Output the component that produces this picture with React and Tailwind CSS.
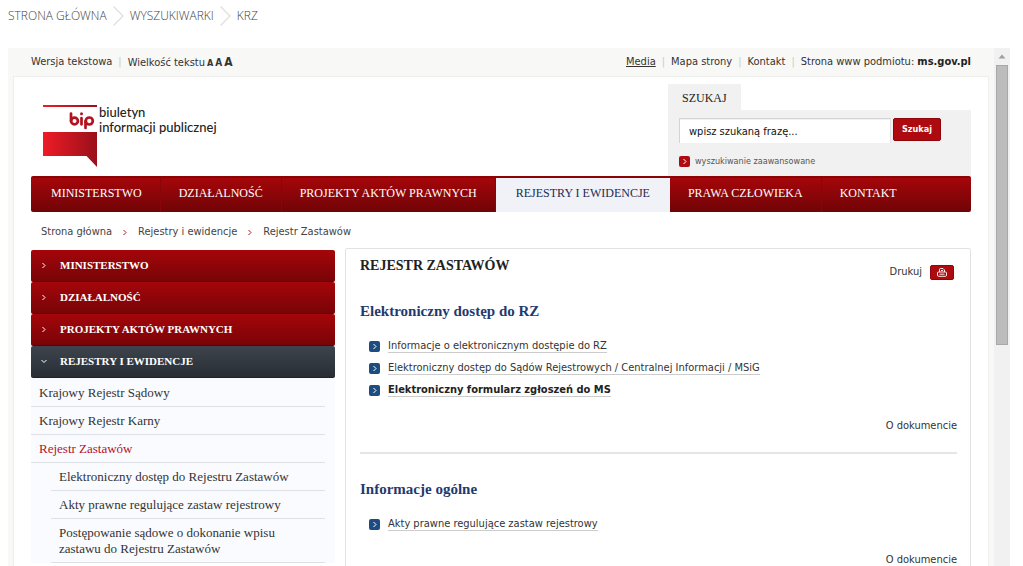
import React from "react";

const trail = ["STRONA GŁÓWNA", "WYSZUKIWARKI", "KRZ"];

const navItems = [
  { label: "MINISTERSTWO" },
  { label: "DZIAŁALNOŚĆ" },
  { label: "PROJEKTY AKTÓW PRAWNYCH" },
  { label: "REJESTRY I EWIDENCJE", active: true },
  { label: "PRAWA CZŁOWIEKA" },
  { label: "KONTAKT" },
];

const sections = [
  {
    title: "Elektroniczny dostęp do RZ",
    links: [
      { label: "Informacje o elektronicznym dostępie do RZ" },
      { label: "Elektroniczny dostęp do Sądów Rejestrowych / Centralnej Informacji / MSiG" },
      { label: "Elektroniczny formularz zgłoszeń do MS", strong: true },
    ],
  },
  {
    title: "Informacje ogólne",
    links: [{ label: "Akty prawne regulujące zastaw rejestrowy" }],
  },
];

function TrailArrow() {
  return (
    <svg width="11" height="20" viewBox="0 0 11 20" fill="none" stroke="#dedede" strokeWidth="1.2" aria-hidden="true">
      <path d="M0.5 0.5L10 10L0.5 19.5" />
    </svg>
  );
}

function Chevron({ className }) {
  return (
    <svg width="4" height="7" viewBox="0 0 4 7" className={className} fill="none" stroke="currentColor" strokeWidth="1" aria-hidden="true">
      <path d="M0.5 1L3 3.500L0.5 6" />
    </svg>
  );
}

function Bullet({ className }) {
  return (
    <span className={"flex size-[11px] shrink-0 items-center justify-center rounded-xs text-white " + className}>
      <Chevron />
    </span>
  );
}

function Logo() {
  return (
    <a href="#bip" className="flex gap-[2px] text-[#222]" aria-label="bip biuletyn informacji publicznej">
      <svg width="54" height="64" viewBox="0 0 54 64" aria-hidden="true">
        <defs>
          <linearGradient id="flag" x1="0" x2="1">
            <stop offset="0" stopColor="#ee1c25" />
            <stop offset="1" stopColor="#99101a" />
          </linearGradient>
        </defs>
        <rect width="54" height="2" y="1" fill="url(#flag)" />
        <path d="M0 28H54V63L43.500 52H0Z" fill="url(#flag)" />
        <g fill="none" stroke="#b5121f" strokeWidth="2.700" strokeLinecap="round">
          <path d="M28 9.500V17" />
          <circle cx="31.500" cy="17" r="3.400" />
          <path d="M38.500 14V20.300" />
          <path d="M42.500 17V24" />
          <circle cx="46.300" cy="17" r="3.500" />
        </g>
        <circle cx="38.500" cy="9.700" r="1.500" fill="#b5121f" />
      </svg>
      <span className="flex flex-col pt-px font-['Lato',sans-serif] text-[13px] leading-[15px] font-medium">
        <span>biuletyn</span>
        <span>informacji publicznej</span>
      </span>
    </a>
  );
}

function UtilityBar() {
  const sep = <span className="text-[#ccc]">|</span>;
  return (
    <div className="flex h-7 items-center justify-between pr-[18px] pl-[23px] text-[11px] text-[#333]">
      <div className="flex items-center gap-[6px]">
        <a href="#text">Wersja tekstowa</a>
        {sep}
        <span className="flex items-baseline gap-[2px]">
          Wielkość tekstu
          <button className="text-[9px] font-bold">A</button>
          <button className="text-[10px] font-bold">A</button>
          <button className="text-[12px] font-bold">A</button>
        </span>
      </div>
      <div className="flex items-center gap-[6px]">
        <a href="#media" className="underline">Media</a>
        {sep}
        <a href="#map">Mapa strony</a>
        {sep}
        <a href="#contact">Kontakt</a>
        {sep}
        <span>
          Strona www podmiotu: <a href="#ms" className="font-bold text-[#222]">ms.gov.pl</a>
        </span>
      </div>
    </div>
  );
}

function Search() {
  return (
    <form className="flex w-[303px] flex-col pt-[7px]" onSubmit={(e) => e.preventDefault()}>
      <label htmlFor="q" className="h-[26px] w-[73px] bg-[#f1f1f1] pl-[14px] font-['Liberation_Serif',serif] text-[12px] leading-[28px] text-[#222]">
        SZUKAJ
      </label>
      <div className="flex flex-1 flex-col bg-[#f1f1f1] px-[11px] pt-2">
        <div className="flex gap-[2px]">
          <input
            id="q"
            defaultValue="wpisz szukaną frazę..."
            className="h-[25px] w-[212px] border-t border-r border-l border-[#d4d4d4] border-r-[#e4e4e4] bg-white pl-[9px] text-[11px] text-[#111] inset-shadow-2xs"
          />
          <button className="h-[23px] w-12 rounded-xs border border-[#8f0509] bg-[#ad0b10] text-[9px] font-bold text-white">Szukaj</button>
        </div>
        <a href="#advanced" className="mt-3 flex items-center gap-[5px] text-[9px] leading-[12px] text-[#555]">
          <Bullet className="bg-[#ad0b10]" />
          wyszukiwanie zaawansowane
        </a>
      </div>
    </form>
  );
}

function MainNav() {
  return (
    <nav className="flex h-9 rounded-xs border-t-2 border-[#8c0306] bg-linear-to-b from-[#a5060a] to-[#700407] pl-[2px] font-['Liberation_Serif',serif] text-[12px] leading-[30px]">
      {navItems.map((item) => (
        <a
          key={item.label}
          href="#nav"
          className={
            item.active
              ? "bg-[#f1f2f7] px-5 text-[#1b2c52]"
              : "border-r border-[#8a0508] px-[18px] text-white last:border-r-0"
          }
        >
          {item.label}
        </a>
      ))}
    </nav>
  );
}

function SideHead({ label, open }) {
  return (
    <a
      href="#section"
      className={
        "flex h-8 items-center gap-[14px] rounded-xs border-b pl-[11px] text-[11px] font-bold text-white " +
        (open ? "border-[#20242a] bg-linear-to-b from-[#3e444d] to-[#292e35]" : "border-[#5c0305] bg-linear-to-b from-[#a5060a] to-[#780407]")
      }
    >
      <Chevron className={open ? "rotate-90" : ""} />
      {label}
    </a>
  );
}

function Sidebar() {
  return (
    <aside className="mt-[2px] w-[304px] shrink-0 font-['Liberation_Serif',serif]">
      <SideHead label="MINISTERSTWO" />
      <SideHead label="DZIAŁALNOŚĆ" />
      <SideHead label="PROJEKTY AKTÓW PRAWNYCH" />
      <SideHead label="REJESTRY I EWIDENCJE" open />
      <ul className="bg-[#fafbff] pt-px pr-[10px] text-[13px] leading-4 text-[#333]">
        {["Krajowy Rejestr Sądowy", "Krajowy Rejestr Karny", "Rejestr Zastawów"].map((label) => (
          <li key={label} className="border-b border-[#dde1e6] pt-[6px] pb-[5px] pl-2">
            <a href="#register" className={label === "Rejestr Zastawów" ? "text-[#b5121f]" : ""}>{label}</a>
          </li>
        ))}
        <li className="pl-5">
          <ul>
            {[
              "Elektroniczny dostęp do Rejestru Zastawów",
              "Akty prawne regulujące zastaw rejestrowy",
              "Postępowanie sądowe o dokonanie wpisu zastawu do Rejestru Zastawów",
            ].map((label) => (
              <li key={label} className="border-b border-[#dde1e6] pt-[6px] pr-8 pb-[5px] pl-2">
                <a href="#sub">{label}</a>
              </li>
            ))}
          </ul>
        </li>
      </ul>
    </aside>
  );
}

function Content() {
  return (
    <main className="flex-1 rounded-xs border border-[#e2e2e2] pr-[13px] pl-[14px] text-[11px] text-[#333]">
      <div className="flex justify-between">
        <h1 className="font-['Liberation_Serif',serif] text-[14px] leading-[34px] font-bold text-[#222]">REJESTR ZASTAWÓW</h1>
        <button className="mt-4 mr-[3px] flex h-[15px] items-center gap-2">
          Drukuj
          <span className="flex h-[15px] w-6 items-center justify-center rounded-xs border border-[#8f0509] bg-[#ad0b10]">
            <svg width="10" height="9" viewBox="0 0 10 9" fill="none" stroke="#fff" strokeWidth="0.9" aria-hidden="true">
              <path d="M2.500 4V1.500Q2.500 0.500 3.500 0.500H6L7.500 2V4M4 2.500H6M1.500 4H8.500Q9.500 4 9.500 5V7Q9.500 8.300 8.500 8.300H1.500Q0.500 8.300 0.500 7V5Q0.500 4 1.500 4ZM2.500 6.200H7.500" />
            </svg>
          </span>
        </button>
      </div>
      {sections.map((s, i) => (
        <section key={s.title} className={i === 0 ? "mt-4 border-b-2 border-[#e6e6e6] pb-4" : "mt-[23px]"}>
          <h2 className="font-['Liberation_Serif',serif] text-[15px] leading-6 font-bold text-[#1f3a6e]">{s.title}</h2>
          <ul className="mt-3 pl-[9px]">
            {s.links.map((l) => (
              <li key={l.label} className="flex h-[22px] items-center gap-2">
                <Bullet className="bg-[#1f4c80]" />
                <a href="#doc" className={"border-b border-[#ccc] leading-[13px] " + (l.strong ? "font-bold text-[#222]" : "")}>{l.label}</a>
              </li>
            ))}
          </ul>
          <div className="mt-[15px] text-right leading-5">
            <a href="#about">O dokumencie</a>
          </div>
        </section>
      ))}
    </main>
  );
}

function Scrollbar() {
  return (
    <div className="flex w-4 shrink-0 flex-col items-center bg-[#f1f1f1]" aria-hidden="true">
      <svg width="16" height="17" viewBox="0 0 16 17">
        <path d="M4.500 10.500L8 6.500L11.500 10.500Z" fill="#a0a0a0" />
      </svg>
      <div className="h-[280px] w-3 border border-[#a8a8a8] bg-[#bcbcbc]" />
    </div>
  );
}

export default function App() {
  return (
    <div className="flex h-screen flex-col overflow-hidden bg-white font-['DejaVu_Sans_Condensed','Roboto',sans-serif]">
      <nav className="flex h-12 shrink-0 items-start gap-[6px] pt-[6px] pl-2 font-['Open_Sans',sans-serif] text-[12px] leading-5 font-light text-[#444]">
        {trail.map((t, i) => (
          <React.Fragment key={t}>
            {i > 0 && <TrailArrow />}
            <a href="#trail">{t}</a>
          </React.Fragment>
        ))}
      </nav>
      <div className="mr-[13px] ml-2 flex min-h-0 flex-1 overflow-hidden">
        <div className="flex-1 bg-[#f8f8f6] pr-[5px]">
          <UtilityBar />
          <div className="ml-[5px] border border-[#eeeeec] bg-white pr-[17px] pb-10 pl-[17px]">
            <header className="flex h-[99px] justify-between">
              <div className="pt-[27px] pl-3">
                <Logo />
              </div>
              <Search />
            </header>
            <MainNav />
            <div className="flex h-9 items-center gap-[11px] pt-1 pl-[10px] text-[11px] text-[#444]">
              <a href="#home">Strona główna</a>
              <Chevron className="text-[#b5121f]" />
              <a href="#registers">Rejestry i ewidencje</a>
              <Chevron className="text-[#b5121f]" />
              <a href="#rz">Rejestr Zastawów</a>
            </div>
            <div className="flex gap-[10px]">
              <Sidebar />
              <Content />
            </div>
          </div>
        </div>
        <Scrollbar />
      </div>
    </div>
  );
}
